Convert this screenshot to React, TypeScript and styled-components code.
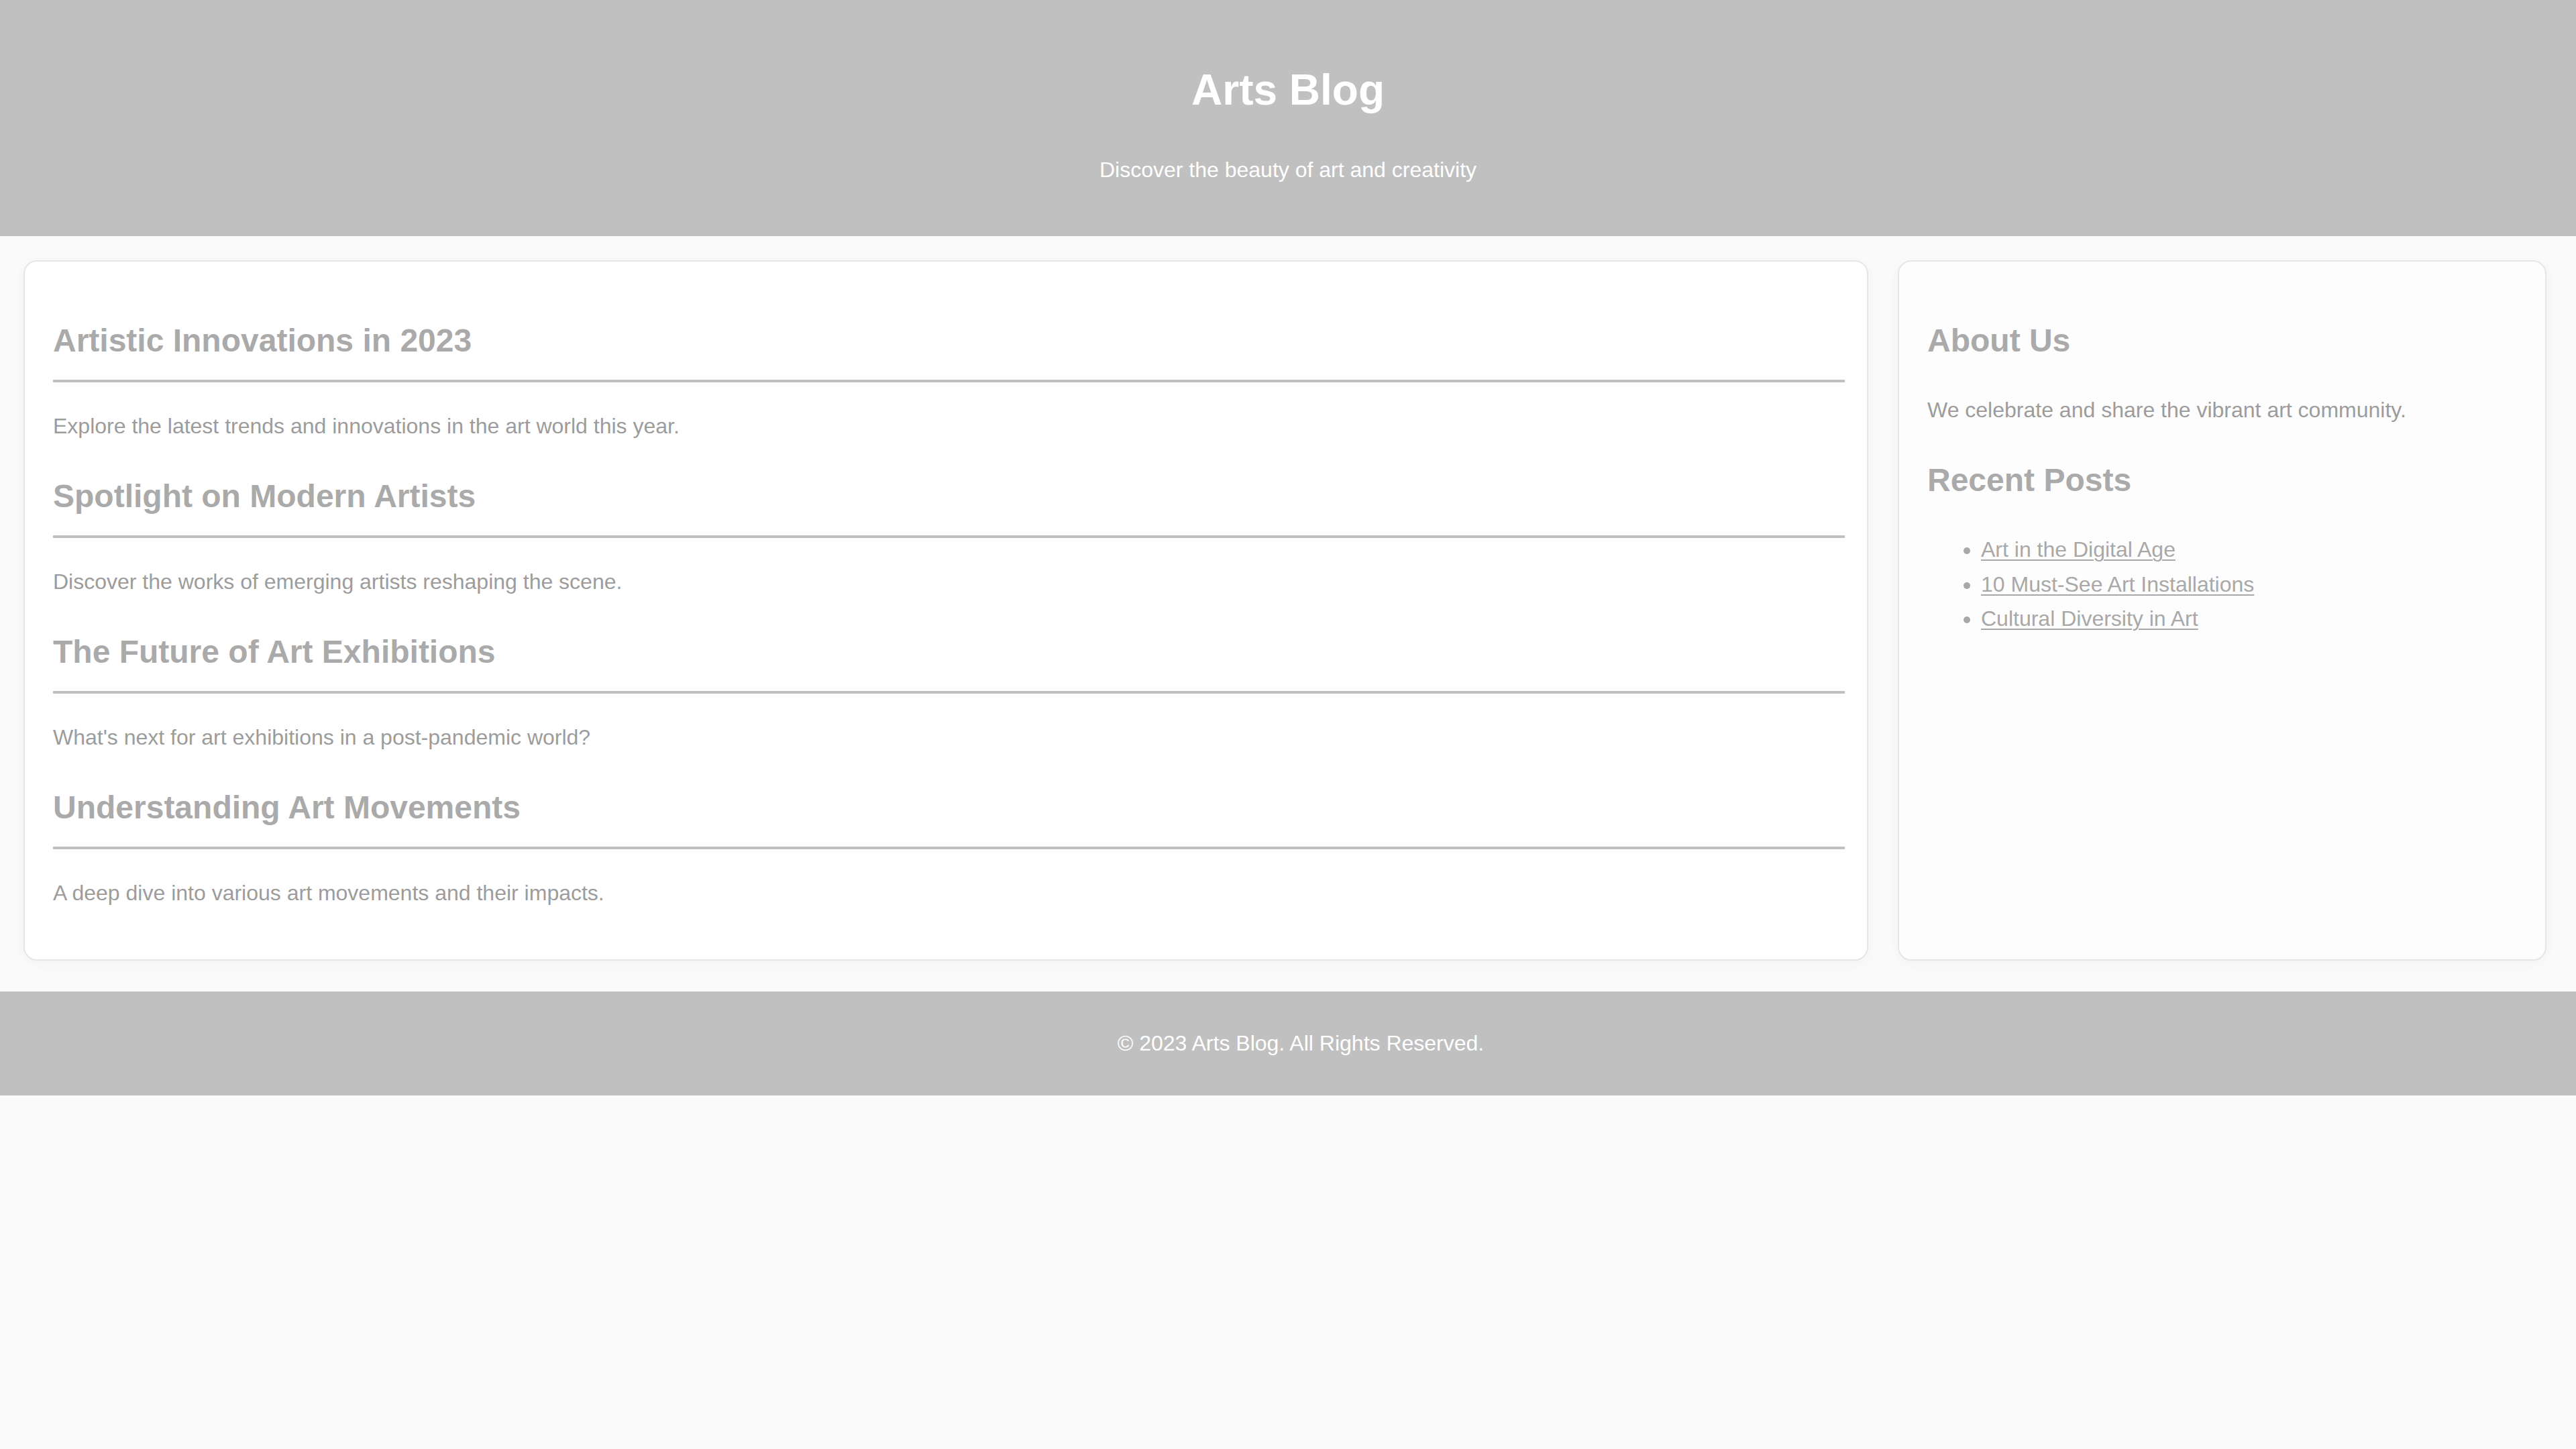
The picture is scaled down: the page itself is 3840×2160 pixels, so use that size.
import styled, { createGlobalStyle } from "styled-components"

const GlobalStyle = createGlobalStyle`
    html, body {
        margin: 0;
        padding: 0;
        background: #fafafa;
        font-family: "Liberation Sans", Arial, sans-serif;
        line-height: 1.6;
    }
    * {
        box-sizing: border-box;
    }
`

const Header = styled.header`
    background: #c0c0c0;
    color: #fff;
    text-align: center;
    padding: 40px;
`

const Title = styled.h1`
    font-size: 64px;
    font-weight: bold;
    margin: 43px 0;
`

const Tagline = styled.p`
    font-size: 32px;
    margin: 32px 0;
`

const Main = styled.main`
    display: flex;
    align-items: stretch;
    gap: 44px;
    padding: 36px 44px 46px 35px;
`

const Card = styled.section<{ $width?: number; $bg?: string }>`
    flex: ${({ $width }) => ($width ? `0 0 ${$width}px` : "1 1 0")};
    min-width: 0;
    background: ${({ $bg }) => $bg || "#fff"};
    border: 2px solid #e6e6e6;
    border-radius: 20px;
    padding: 40px 33px 40px 42px;
    box-shadow: 0 4px 18px rgba(0, 0, 0, 0.035);
`

const Heading = styled.h2<{ $ruled?: boolean }>`
    font-size: 48px;
    font-weight: bold;
    color: #aaaaaa;
    margin: 40px 0;
    padding-bottom: ${({ $ruled }) => ($ruled ? "20px" : "0")};
    border-bottom: ${({ $ruled }) => ($ruled ? "4px solid #c0c0c0" : "none")};
`

const Text = styled.p`
    font-size: 32px;
    color: #9c9c9c;
    margin: 32px 0;
`

const PostList = styled.ul`
    margin: 32px 0;
    padding-left: 80px;
    font-size: 32px;
    color: #a8a8a8;
    line-height: 1.6;
`

const PostLink = styled.a`
    color: #a8a8a8;
    text-decoration: underline;
    text-decoration-thickness: 2px;
    text-underline-offset: 4px;
`

const Footer = styled.footer`
    background: #c0c0c0;
    color: #fff;
    text-align: center;
    padding: 52px 0 52px 38px;
    p {
        font-size: 32px;
        margin: 0;
    }
`

const posts = [
    { title: "Artistic Innovations in 2023", text: "Explore the latest trends and innovations in the art world this year." },
    { title: "Spotlight on Modern Artists", text: "Discover the works of emerging artists reshaping the scene." },
    { title: "The Future of Art Exhibitions", text: "What's next for art exhibitions in a post-pandemic world?" },
    { title: "Understanding Art Movements", text: "A deep dive into various art movements and their impacts." },
]

const recent = ["Art in the Digital Age", "10 Must-See Art Installations", "Cultural Diversity in Art"]

export default function App() {
    return (
        <>
            <GlobalStyle />
            <Header>
                <Title>Arts Blog</Title>
                <Tagline>Discover the beauty of art and creativity</Tagline>
            </Header>
            <Main>
                <Card>
                    {posts.map((post) => (
                        <article key={post.title}>
                            <Heading $ruled>{post.title}</Heading>
                            <Text>{post.text}</Text>
                        </article>
                    ))}
                </Card>
                <Card as="aside" $width={967} $bg="#fdfdfd">
                    <Heading>About Us</Heading>
                    <Text>We celebrate and share the vibrant art community.</Text>
                    <Heading>Recent Posts</Heading>
                    <PostList>
                        {recent.map((item) => (
                            <li key={item}>
                                <PostLink href="#">{item}</PostLink>
                            </li>
                        ))}
                    </PostList>
                </Card>
            </Main>
            <Footer>
                <p>© 2023 Arts Blog. All Rights Reserved.</p>
            </Footer>
        </>
    )
}
